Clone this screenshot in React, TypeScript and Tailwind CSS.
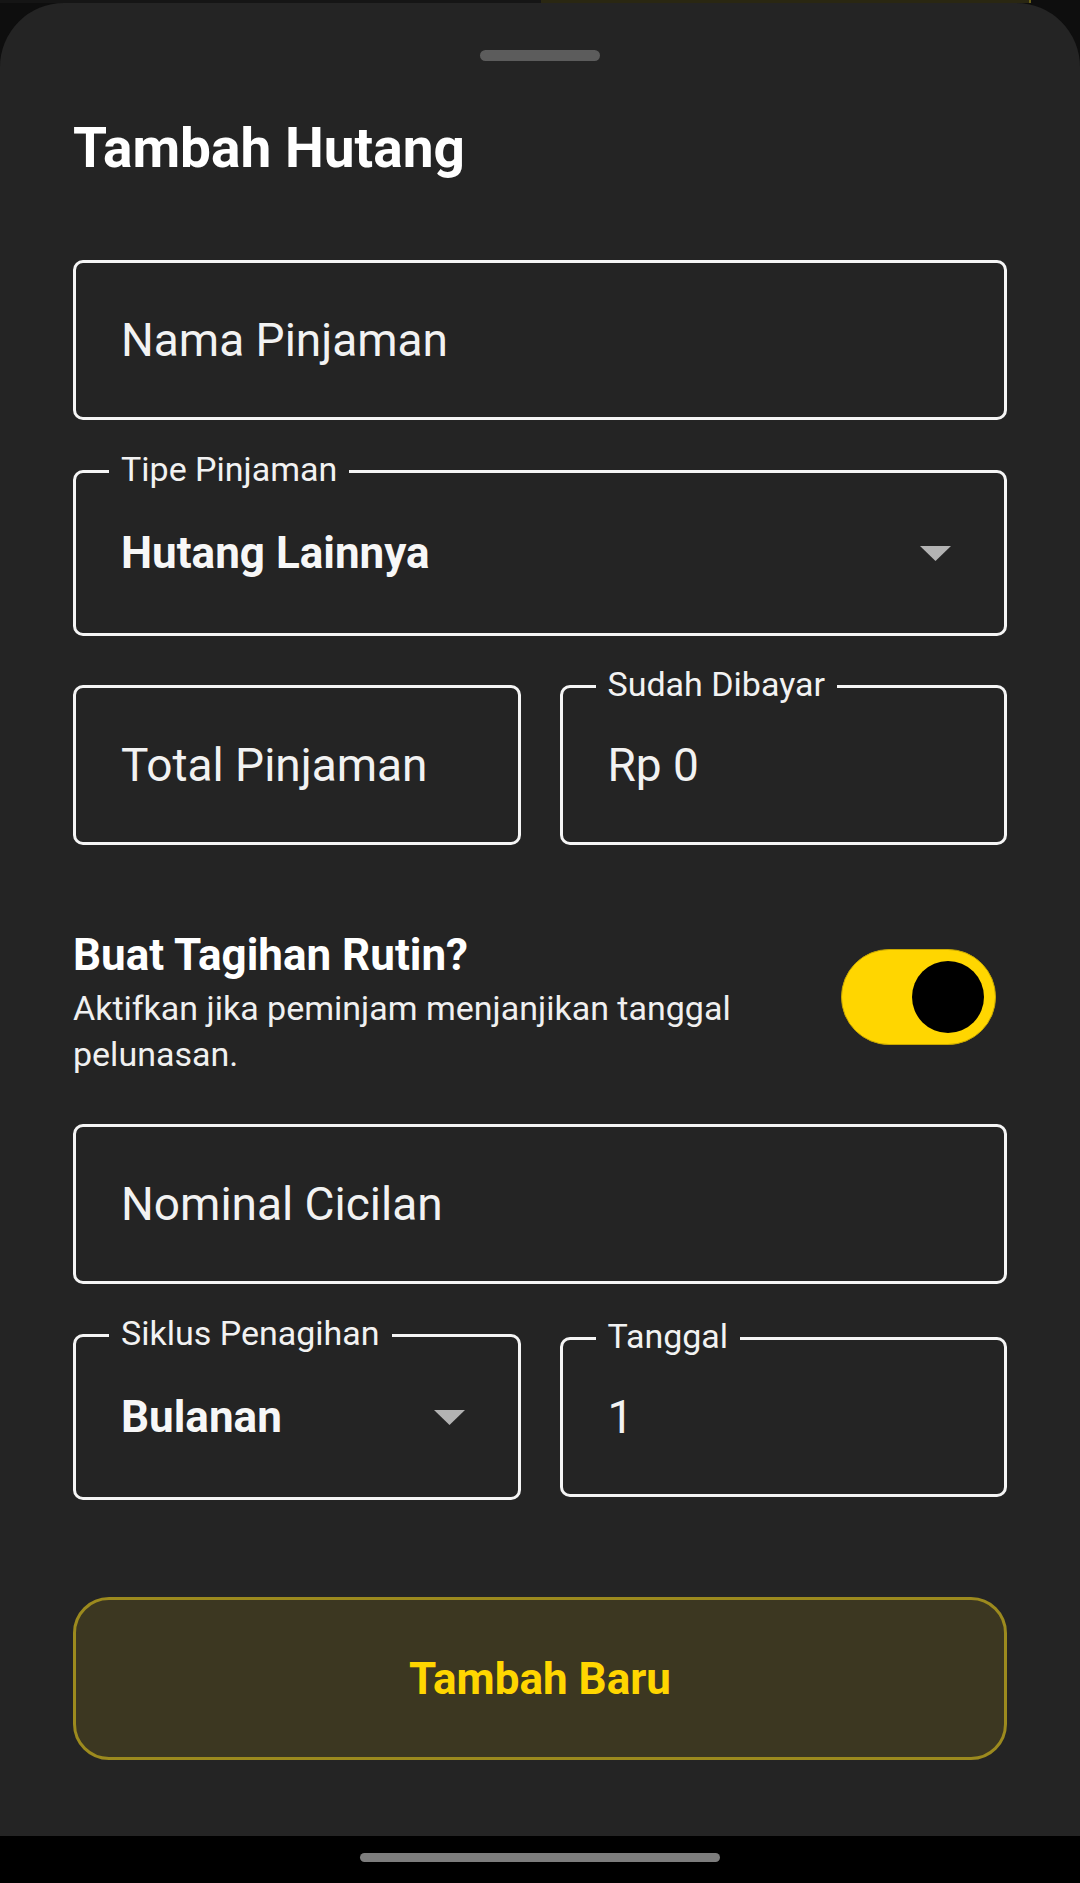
import { ReactNode } from 'react';

function Caret() {
  return (
    <svg width="31" height="15" viewBox="0 0 31 15" className="shrink-0">
      <polygon points="0,0 31,0 15.5,15" fill="#b3b3b3" />
    </svg>
  );
}

function FloatingLabel({ children }: { children: ReactNode }) {
  return (
    <span className="absolute left-[33px] top-[-4px] -translate-y-1/2 bg-[#242424] px-[12px] text-[34px] leading-[40px] text-[#f2f2f2] whitespace-nowrap">
      {children}
    </span>
  );
}

function OutlinedField({
  label,
  value,
  className = '',
}: {
  label?: string;
  value: string;
  className?: string;
}) {
  return (
    <div
      className={`relative flex h-[160px] items-center rounded-[10px] border-[3px] border-[#f5f5f5] pl-[45px] ${className}`}
    >
      {label && <FloatingLabel>{label}</FloatingLabel>}
      <span className="text-[46px] leading-[54px] text-[#f2f2f2]">{value}</span>
    </div>
  );
}

function DropdownField({ label, value }: { label: string; value: string }) {
  return (
    <div className="relative flex h-[166px] items-center justify-between rounded-[10px] border-[3px] border-[#f5f5f5] pl-[45px] pr-[53px]">
      <FloatingLabel>{label}</FloatingLabel>
      <span className="text-[44px] font-bold leading-[54px] text-[#f7f7f7]">{value}</span>
      <Caret />
    </div>
  );
}

export default function App() {
  return (
    <div className="flex h-[1883px] w-[1080px] flex-col bg-[#0e0e0e] [font-family:Roboto,'Liberation_Sans',sans-serif]">
      {/* sliver of the screen underneath */}
      <div className="flex h-[3px] shrink-0">
        <div className="w-[541px] bg-[#151515]" />
        <div className="w-[490px] border-r-2 border-[#6b6218] bg-[#2a2712]" />
        <div className="flex-1" />
      </div>

      <div className="flex flex-1 flex-col rounded-t-[64px] bg-[#242424] px-[73px] pt-[47px]">
        <div className="mx-auto h-[11px] w-[120px] rounded-full bg-[#5c5c5c]" />

        <h1 className="mt-[55px] text-[55px] font-bold leading-[64px] text-white">Tambah Hutang</h1>

        <OutlinedField className="mt-[80px]" value="Nama Pinjaman" />

        <div className="mt-[50px]">
          <DropdownField label="Tipe Pinjaman" value="Hutang Lainnya" />
        </div>

        <div className="mt-[49px] grid grid-cols-2 gap-[39px]">
          <OutlinedField value="Total Pinjaman" />
          <OutlinedField label="Sudah Dibayar" value="Rp 0" />
        </div>

        <div className="mt-[84px] flex items-center gap-[32px]">
          <div className="flex-1">
            <div className="text-[44px] font-bold leading-[52px] text-white">Buat Tagihan Rutin?</div>
            <p className="mt-[4px] max-w-[700px] text-[34px] leading-[46px] text-[#f0f0f0]">
              Aktifkan jika peminjam menjanjikan tanggal pelunasan.
            </p>
          </div>
          <div className="mb-[12px] mr-[11px] flex h-[96px] w-[155px] items-center justify-end rounded-full border border-[#c9a800] bg-[#ffd600] pr-[11px]">
            <div className="h-[72px] w-[72px] rounded-full bg-black" />
          </div>
        </div>

        <OutlinedField className="mt-[47px]" value="Nominal Cicilan" />

        <div className="mt-[50px] grid grid-cols-2 items-center gap-[39px]">
          <DropdownField label="Siklus Penagihan" value="Bulanan" />
          <OutlinedField label="Tanggal" value="1" />
        </div>

        <button className="mt-[97px] flex h-[163px] items-center justify-center rounded-[36px] border-[3px] border-[#9c8a1e] bg-[#3c3721] text-[44px] font-bold text-[#ffd600]">
          Tambah Baru
        </button>
      </div>

      <div className="flex h-[47px] shrink-0 items-start justify-center bg-black pt-[17px]">
        <div className="h-[9px] w-[360px] rounded-full bg-[#7d7d7d]" />
      </div>
    </div>
  );
}
